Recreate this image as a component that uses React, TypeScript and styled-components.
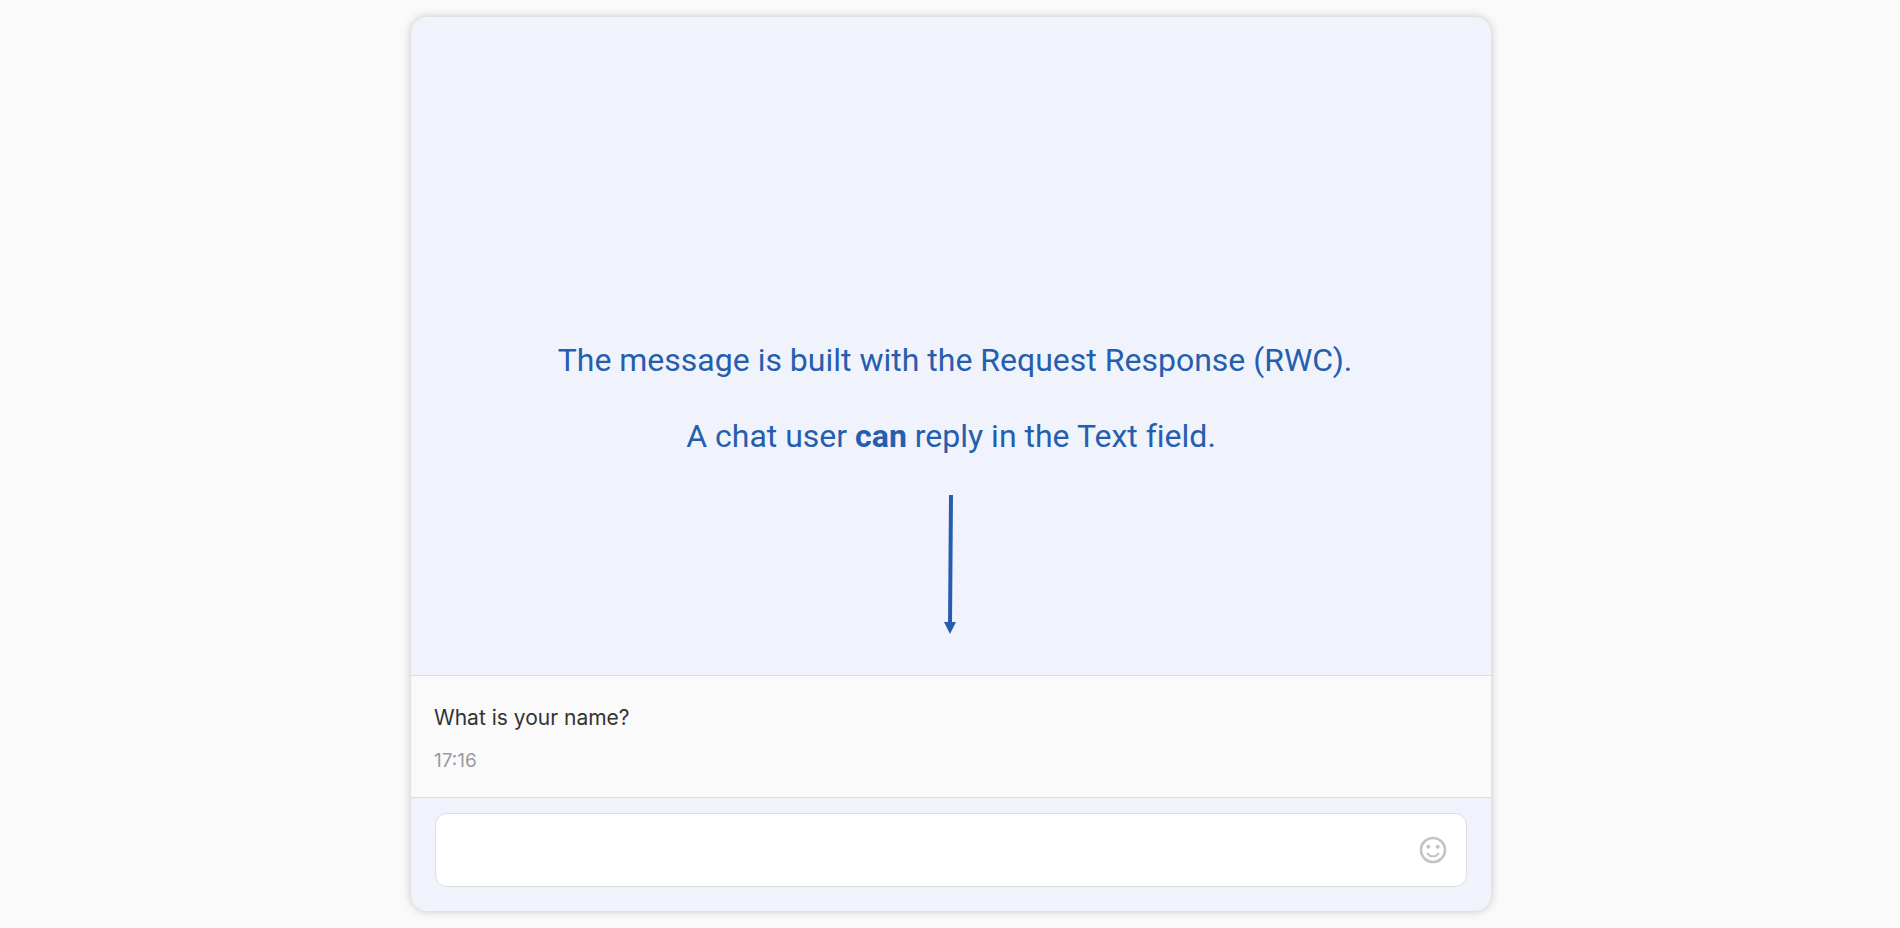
import React from 'react';
import styled, { createGlobalStyle } from 'styled-components';

const GlobalStyle = createGlobalStyle`
  *, *::before, *::after { box-sizing: border-box; }
  body { margin: 0; background: #fafafa; }
`;

const Page = styled.div`
  display: flex;
  justify-content: center;
  min-height: 100vh;
  padding: 17px 16px 17px 18px;
`;

const ChatCard = styled.main`
  display: flex;
  flex-direction: column;
  width: 100%;
  max-width: 1080px;
  overflow: hidden;
  border-radius: 16px;
  background: #f0f3fc;
  box-shadow: 0 0 10px rgba(0, 0, 0, 0.22);
`;

const Annotation = styled.section`
  display: flex;
  flex: 1;
  flex-direction: column;
  align-items: center;
  justify-content: flex-end;
  gap: 36px;
  padding: 40px 24px;
  color: #265eae;
  font: 400 32px/40px Roboto, sans-serif;
  font-variant-ligatures: none;
  text-align: center;
`;

const Line = styled.p`
  margin: 0;
`;

const Arrow = styled.svg`
  display: block;
  width: 16px;
  height: 143px;
`;

const Message = styled.article`
  display: flex;
  flex-direction: column;
  gap: 16px;
  padding: 28px 23px 24px;
  border-top: 1px solid #dddddf;
  border-bottom: 1px solid #dddddf;
  background: #fafafa;
  font-family: Inter, sans-serif;
`;

const MessageText = styled.p`
  margin: 0;
  color: #333;
  font-size: 21px;
  line-height: 28px;
`;

const Time = styled.time`
  color: #989ba2;
  font-size: 19px;
  line-height: 25px;
`;

const ReplyForm = styled.form`
  padding: 15px 24px 24px;
`;

const Field = styled.div`
  display: flex;
  align-items: center;
  height: 74px;
  padding: 0 17px;
  border: 1px solid #dddddf;
  border-radius: 12px;
  background: #fff;
`;

const TextInput = styled.input`
  flex: 1;
  min-width: 0;
  height: 100%;
  padding: 0;
  border: 0;
  outline: 0;
  background: transparent;
  color: #333;
  font: 400 21px/28px Inter, sans-serif;
`;

const EmojiButton = styled.button`
  display: flex;
  padding: 0;
  border: 0;
  background: none;
  color: #c4c4c4;
  cursor: pointer;
`;

export default function App() {
  return (
    <>
      <GlobalStyle />
      <Page>
        <ChatCard>
          <Annotation>
            <Line>&nbsp;The message is built with the Request Response (RWC).</Line>
            <Line>
              A chat user <b>can</b> reply in the Text field.
            </Line>
            <Arrow viewBox="0 0 16 143" aria-hidden="true">
              <path d="M8 3 L7 133" stroke="#265eae" strokeWidth="4" />
              <path d="M1 130 H13 L7 142 Z" fill="#265eae" />
            </Arrow>
          </Annotation>
          <Message>
            <MessageText>What is your name?</MessageText>
            <Time dateTime="17:16">17:16</Time>
          </Message>
          <ReplyForm onSubmit={(event) => event.preventDefault()}>
            <Field>
              <TextInput type="text" aria-label="Your reply" />
              <EmojiButton type="button" aria-label="Insert emoji">
                <svg width="32" height="32" viewBox="0 0 24 24" fill="currentColor" aria-hidden="true">
                  <path d="M12 2a10 10 0 1 0 0 20 10 10 0 0 0 0-20zm0 18a8 8 0 1 1 0-16 8 8 0 0 1 0 16z" />
                  <circle cx="8.5" cy="9.5" r="1.5" />
                  <circle cx="15.500" cy="9.5" r="1.5" />
                  <path d="M12 16c-1.480 0-2.750-.81-3.450-2H6.880a5.495 5.495 0 0 0 10.240 0h-1.670c-.69 1.190-1.970 2-3.450 2z" />
                </svg>
              </EmojiButton>
            </Field>
          </ReplyForm>
        </ChatCard>
      </Page>
    </>
  );
}
